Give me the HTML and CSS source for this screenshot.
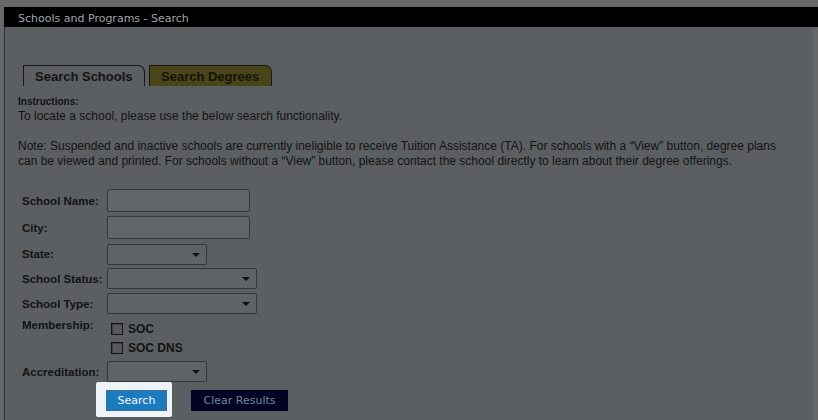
FILE: index.html
```html
<html>
	<head>
		<meta charset="utf-8" />
		<title>Schools and Programs - Search</title>
		<link rel="stylesheet" href="styles.css">
	</head>
	<body>
		<div class="titlebar">Schools and Programs - Search</div>
		<div class="panel">
			<ul class="tabs">
				<li class="tab active">Search Schools</li>
				<li class="tab degrees">Search Degrees</li>
			</ul>
			<div class="instr_head">Instructions:</div>
			<p class="instr">To locate a school, please use the below search functionality.</p>
			<p class="instr note">Note: Suspended and inactive schools are currently ineligible to receive Tuition Assistance (TA). For schools with a &ldquo;View&rdquo; button, degree plans can be viewed and printed. For schools without a &ldquo;View&rdquo; button, please contact the school directly to learn about their degree offerings.</p>
			<div class="form">
				<div class="row r_name"><label>School Name:</label><span class="input"></span></div>
				<div class="row r_city"><label>City:</label><span class="input"></span></div>
				<div class="row r_state"><label>State:</label><span class="select short"></span></div>
				<div class="row r_status"><label>School Status:</label><span class="select long"></span></div>
				<div class="row r_type"><label>School Type:</label><span class="select long"></span></div>
				<div class="row r_member">
					<label>Membership:</label>
					<div class="checks">
						<div class="check"><span class="box"></span>SOC</div>
						<div class="check"><span class="box"></span>SOC DNS</div>
					</div>
				</div>
				<div class="row r_accr"><label>Accreditation:</label><span class="select short"></span></div>
				<div class="buttons">
					<span class="spot"><span class="btn search">Search</span></span>
					<span class="btn clear">Clear Results</span>
				</div>
			</div>
		</div>
	</body>
</html>
```
FILE: styles.css
```css
	* {margin: 0; padding: 0;}
	body {background: #676767; padding-top: 7px; width: 818px; height: 420px; overflow: hidden; font-family: "Liberation Sans", Arial, sans-serif; color: #131313;}
/*title*/
	.titlebar {margin-left: 4px; height: 20px; background: #000; color: #9ea5ab; font: 11px/23px "DejaVu Sans", Verdana, sans-serif; padding-left: 14px;}
/*panel*/
	.panel {margin-left: 4px; width: 809px; height: 400px; background: #5b5f62; border-left: 1px solid #2e3133; padding: 38px 0 0 13px; box-sizing: border-box;}
/*tabs*/
	.tabs {list-style: none; display: flex; gap: 4px; margin-left: 5px; height: 21px;}
	.tab {border: 1px solid #161718; border-bottom: 0; border-top-right-radius: 7px; font-weight: bold; font-size: 13px; line-height: 21px; box-sizing: border-box; height: 21px;}
	.tab.active {width: 122px; padding-left: 11px;}
	.tab.degrees {width: 123px; padding-left: 11px; background: #4a4518; color: #141408;}
/*instructions*/
	.instr_head {font-size: 10px; font-weight: bold; margin-top: 9px; line-height: 14px;}
	.instr {font-size: 12px; line-height: 15px;}
	.note {margin-top: 15px; width: 778px;}
/*form*/
	.form {padding-left: 4px; margin-top: 20px;}
	.row {display: flex; align-items: center; font-size: 11.5px; font-weight: bold;}
	.row label {width: 85px; flex: none;}
	.input {display: block; width: 143px; height: 23px; box-sizing: border-box; background: #636669; border: 1px solid #33373a; border-radius: 2px;}
	.select {display: block; height: 21px; box-sizing: border-box; background: #5f6366; border: 1px solid #33373a; border-radius: 2px; position: relative;}
	.select:after {content: ""; position: absolute; right: 6px; top: 8px; border-left: 4px solid transparent; border-right: 4px solid transparent; border-top: 4px solid #111;}
	.select.short {width: 100px;}
	.select.long {width: 150px;}
	.r_city {margin-top: 4px;}
	.r_state {margin-top: 4px; height: 22px;}
	.r_status {margin-top: 3px;}
	.r_type {margin-top: 4px;}
	.r_member {margin-top: 5px; align-items: flex-start;}
	.checks {padding-left: 4px;}
	.check {display: flex; align-items: center; height: 19px; font-size: 12px;}
	.box {width: 10px; height: 10px; border: 1px solid #141414; background: #55595c; box-shadow: inset 1px 1px 0 #3c3f41; margin-right: 5px;}
	.r_accr {margin-top: 4px;}
	.buttons {display: flex; align-items: center; margin-top: -1px; margin-left: 74px; height: 36px;}
	.spot {display: block; background: #eef3f7; padding: 8px 5px 6px 10px; border-radius: 2px;}
	.btn {display: block; font: 11px/21px "DejaVu Sans", Verdana, sans-serif; text-align: center; height: 21px;}
	.btn.search {width: 61px; background: #1c7bbf; color: #f4f8fb; border: 1px solid #3d6f95; box-sizing: border-box; line-height: 19px;}
	.btn.clear {width: 97px; background: #010123; color: #6c8a9c; margin-left: 19px; margin-top: 2px;}
```
